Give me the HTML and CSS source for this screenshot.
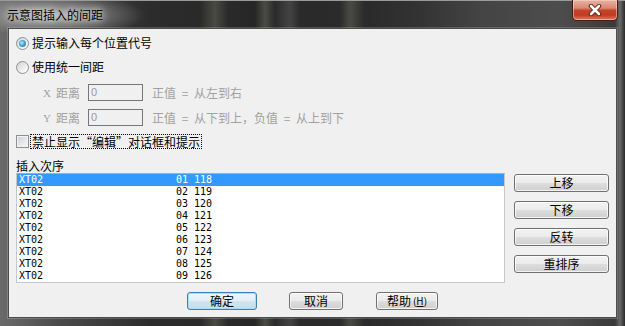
FILE: index.html
```html
<!DOCTYPE html>
<html lang="zh-CN">
<head>
<meta charset="utf-8">
<title>示意图插入的间距</title>
<link rel="stylesheet" href="styles.css">
</head>
<body>
<div class="window">
  <div class="titlebar">
    <span class="title">示意图插入的间距</span>
    <div class="close">
      <svg width="14" height="12" viewBox="0 0 14 12">
        <path d="M3 2 L11 10 M11 2 L3 10" stroke="#5a1a10" stroke-width="4.4" stroke-linecap="round"/>
        <path d="M3 2 L11 10 M11 2 L3 10" stroke="#ffffff" stroke-width="2.6" stroke-linecap="round"/>
      </svg>
    </div>
  </div>
  <div class="client">
    <div class="opt">
      <span class="radio checked"></span><span class="opt-text">提示输入每个位置代号</span>
    </div>
    <div class="opt">
      <span class="radio"></span><span class="opt-text">使用统一间距</span>
    </div>
    <div class="dist first">
      <span class="axis">X</span><span class="dlabel">距离</span><span class="input">0</span><span class="hint">正值 = 从左到右</span>
    </div>
    <div class="dist">
      <span class="axis">Y</span><span class="dlabel">距离</span><span class="input">0</span><span class="hint">正值 = 从下到上，负值 = 从上到下</span>
    </div>
    <div class="check-row">
      <span class="checkbox"></span><span class="focus-text">禁止显示“编辑”对话框和提示</span>
    </div>
    <div class="seq-label">插入次序</div>
    <div class="seq">
      <div class="list">
        <div class="item selected"><span class="c1">XT02</span><span>01 118</span></div>
        <div class="item"><span class="c1">XT02</span><span>02 119</span></div>
        <div class="item"><span class="c1">XT02</span><span>03 120</span></div>
        <div class="item"><span class="c1">XT02</span><span>04 121</span></div>
        <div class="item"><span class="c1">XT02</span><span>05 122</span></div>
        <div class="item"><span class="c1">XT02</span><span>06 123</span></div>
        <div class="item"><span class="c1">XT02</span><span>07 124</span></div>
        <div class="item"><span class="c1">XT02</span><span>08 125</span></div>
        <div class="item"><span class="c1">XT02</span><span>09 126</span></div>
      </div>
      <div class="side">
        <div class="btn side-btn">上移</div>
        <div class="btn side-btn">下移</div>
        <div class="btn side-btn">反转</div>
        <div class="btn side-btn">重排序</div>
      </div>
    </div>
    <div class="footer">
      <div class="btn default ok">确定</div>
      <div class="btn cancel">取消</div>
      <div class="btn help">帮助 <span class="acc">(<u>H</u>)</span></div>
    </div>
  </div>
</div>
</body>
</html>
```
FILE: styles.css
```css
* { box-sizing: border-box; }
html, body { margin: 0; padding: 0; background: #1a1a1a; }
body {
  font-family: "Noto Sans CJK SC", "Noto Sans", sans-serif;
  font-size: 12px;
  color: #000;
}
.window {
  width: 625px;
  height: 326px;
  display: flex;
  flex-direction: column;
  border-top: 1px solid #9a9a9a;
  background:
    radial-gradient(ellipse 90px 22px at 55px 14px, rgba(200,200,200,0.75), rgba(200,200,200,0) 100%),
    linear-gradient(90deg, #6a6a6a 0px, #4a4a4a 60px, #2c2c2c 150px, #2a2a2a 200px, #4a4a44 215px, #2a2a2a 228px, #262626 255px, #4b4b46 265px, #2a2a2a 275px, #444 290px, #2a2a2a 300px, #2b2b2b 340px, #4a4a45 350px, #2a2a2a 365px, #333 420px, #444 480px, #4d4d4d 560px, #3a3a3a 615px, #6a6a6a 620px, #2a2a2a 625px);
}
.titlebar {
  height: 27px;
  display: flex;
  align-items: flex-start;
  flex-shrink: 0;
}
.title {
  margin-left: 7px;
  line-height: 27px;
  font-size: 12px;
  color: #000;
  text-shadow: 0 0 6px rgba(255,255,255,0.9), 0 0 10px rgba(255,255,255,0.6);
}
.close {
  margin-left: auto;
  margin-right: 7px;
  margin-top: -1px;
  width: 46px;
  height: 21px;
  border: 1px solid #4a1c14;
  border-top: none;
  border-radius: 0 0 5px 5px;
  background: linear-gradient(180deg, #e9b2a3 0%, #d98873 40%, #c4432a 52%, #c13b22 75%, #e07a5e 100%);
  box-shadow: inset 0 0 0 1px rgba(255,220,210,0.5);
  display: flex;
  align-items: center;
  justify-content: center;
}
.client {
  margin: 0 8px 0 8px;
  height: 290px;
  background: #f0f0f0;
  border: 1px solid #4c4c4c;
  box-shadow: 0 0 0 1px rgba(255,255,255,0.18);
  padding: 2px 7px 0 7px;
  display: flex;
  flex-direction: column;
}
.opt {
  height: 24px;
  display: flex;
  align-items: center;
}
.radio {
  width: 13px;
  height: 13px;
  border-radius: 50%;
  border: 1px solid #8e8f8f;
  background: linear-gradient(135deg, #d2d2d2 0%, #f4f4f4 70%, #ffffff 100%);
  display: flex;
  align-items: center;
  justify-content: center;
  flex-shrink: 0;
}
.radio.checked::after {
  content: "";
  width: 7px;
  height: 7px;
  border-radius: 50%;
  background: radial-gradient(circle at 40% 40%, #b7ecff 0%, #4aa8da 45%, #1b5a8c 100%);
}
.opt-text {
  margin-left: 3px;
  line-height: 14px;
}
.dist {
  height: 25px;
  display: flex;
  align-items: center;
  color: #a0a0a0;
}
.dist.first { margin-top: 1px; }
.axis {
  margin-left: 27px;
  width: 13px;
  font-family: "Liberation Serif", serif;
  font-size: 11px;
}
.dlabel {
  width: 32px;
  line-height: 14px;
}
.input {
  width: 55px;
  height: 17px;
  border: 1px solid #767676;
  background: #f0f0f0;
  font-family: "Liberation Sans", sans-serif;
  font-size: 11px;
  line-height: 15px;
  padding-left: 2px;
  color: #9a9a9a;
}
.hint {
  margin-left: 9px;
  line-height: 14px;
  white-space: pre;
  word-spacing: 3px;
}
.check-row {
  height: 23px;
  display: flex;
  align-items: center;
}
.checkbox {
  width: 13px;
  height: 13px;
  border: 1px solid #8e8f8f;
  background: linear-gradient(135deg, #cbcfd5 0%, #e6e8eb 55%, #f7f7f7 100%);
  box-shadow: inset 0 0 0 1px #f4f4f4;
  flex-shrink: 0;
}
.focus-text {
  margin-left: 2px;
  line-height: 13px;
  padding: 0 1px;
  outline: 1px dotted #000;
}
.seq-label {
  margin-top: 6px;
  line-height: 14px;
  height: 14px;
}
.seq {
  display: flex;
  align-items: flex-start;
}
.list {
  width: 490px;
  height: 110px;
  border: 1px solid #c6c8cc;
  border-top-color: #abadb3;
  background: #fff;
  padding: 0;
}
.item {
  height: 12px;
  display: flex;
  font-family: "DejaVu Sans Mono", monospace;
  font-size: 10px;
  line-height: 12px;
  padding-left: 2px;
  color: #000;
}
.item.selected {
  background: #3399ff;
  color: #fff;
}
.c1 { width: 157px; }
.side {
  margin-left: 9px;
  margin-top: 1px;
  display: flex;
  flex-direction: column;
  gap: 9px;
}
.btn {
  height: 18px;
  border: 1px solid #707070;
  border-radius: 3px;
  background: linear-gradient(180deg, #f2f2f2 0%, #ebebeb 48%, #dddddd 52%, #cfcfcf 100%);
  box-shadow: inset 0 0 0 1px rgba(255,255,255,0.75);
  display: flex;
  align-items: center;
  justify-content: center;
  line-height: 14px;
  color: #000;
}
.side-btn { width: 95px; }
.footer {
  margin-top: 9px;
  display: flex;
  gap: 32px;
}
.ok { margin-left: 171px; width: 70px; }
.btn.default {
  border-color: #3c7fb1;
  box-shadow: inset 0 0 0 1px #a9dcf5;
  background: linear-gradient(180deg, #eef6fb 0%, #e3eef6 48%, #d3e4ef 52%, #c8dbe8 100%);
}
.cancel { width: 54px; }
.help { width: 62px; margin-left: 1px; }
.acc { font-size: 10px; margin-left: 2px; }
```
